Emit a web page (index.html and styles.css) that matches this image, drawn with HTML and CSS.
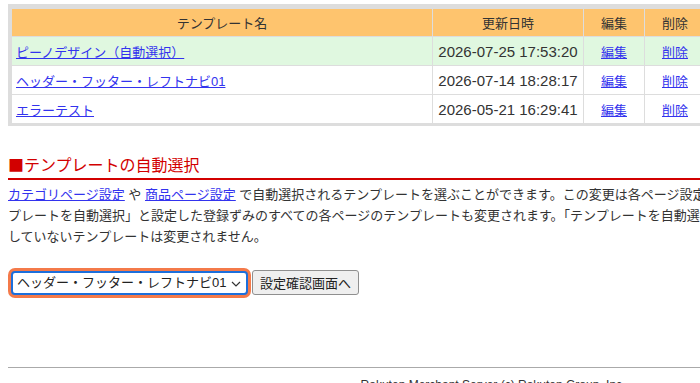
FILE: index.html
```html
<!DOCTYPE html>
<html lang="ja">
<head>
    <meta charset="UTF-8">
    <title>テンプレート一覧</title>
    <link rel="stylesheet" href="styles.css">
</head>
<body>
    <div class="page">
        <div class="table-frame">
            <table class="template-table">
                <tr>
                    <th class="col-name">テンプレート名</th>
                    <th class="col-date">更新日時</th>
                    <th class="col-action">編集</th>
                    <th class="col-action">削除</th>
                </tr>
                <tr class="auto-row">
                    <td class="name"><a href="#">ピーノデザイン（自動選択）</a></td>
                    <td class="date">2026-07-25 17:53:20</td>
                    <td><a href="#">編集</a></td>
                    <td><a href="#">削除</a></td>
                </tr>
                <tr>
                    <td class="name"><a href="#">ヘッダー・フッター・レフトナビ01</a></td>
                    <td class="date">2026-07-14 18:28:17</td>
                    <td><a href="#">編集</a></td>
                    <td><a href="#">削除</a></td>
                </tr>
                <tr>
                    <td class="name"><a href="#">エラーテスト</a></td>
                    <td class="date">2026-05-21 16:29:41</td>
                    <td><a href="#">編集</a></td>
                    <td><a href="#">削除</a></td>
                </tr>
            </table>
        </div>

        <h2 class="section-title">■テンプレートの自動選択</h2>
        <p class="section-text">
            <a href="#">カテゴリページ設定</a> や <a href="#">商品ページ設定</a> で自動選択されるテンプレートを選ぶことができます。この変更は各ページ設定で「テン<br>プレートを自動選択」と設定した登録ずみのすべての各ページのテンプレートも変更されます。「テンプレートを自動選択」と設定<br>していないテンプレートは変更されません。
        </p>

        <form class="auto-form">
            <span class="select-wrap">
                <select class="template-select">
                    <option>ヘッダー・フッター・レフトナビ01</option>
                    <option>ピーノデザイン</option>
                    <option>エラーテスト</option>
                </select>
                <svg class="select-arrow" width="10" height="6" viewBox="0 0 10 6">
                    <path d="M1 1 L5 5 L9 1" fill="none" stroke="#333" stroke-width="1.2"/>
                </svg>
            </span>
            <button type="button" class="confirm-btn">設定確認画面へ</button>
        </form>

        <hr class="footer-rule">
        <div class="footer">Rakuten Merchant Server (c) Rakuten Group, Inc.</div>
    </div>
</body>
</html>
```

FILE: styles.css
```css
html, body {
    margin: 0;
    overflow: hidden;
    background: #fff;
}
body {
    font-family: "Liberation Sans", "Noto Sans CJK JP", sans-serif;
    font-size: 13px;
    color: #333;
}
a {
    color: #3333ee;
}
.page {
    width: 970px;
    padding: 4px 8px 0;
}
.table-frame {
    width: 695px;
    background-color: #dddddd;
    padding: 4px 3px 2px;
}
.template-table {
    width: 100%;
    border-collapse: separate;
    border-spacing: 1px;
}
.template-table th {
    background-color: #fec46e;
    font-weight: normal;
    height: 27px;
    padding: 0 4px;
    color: #333;
}
.template-table td {
    background-color: #fff;
    height: 28px;
    padding: 0 4px;
    text-align: center;
}
.template-table .auto-row td {
    background-color: #e0f8e0;
}
.template-table td.name {
    text-align: left;
}
.template-table td.date {
    font-size: 15px;
    color: #333;
}
.col-name {
    width: 412px;
}
.col-date {
    width: 142px;
}
.col-action {
    width: 52px;
}
.section-title {
    margin: 27px 0 0;
    padding-bottom: 3px;
    font-family: "Noto Sans CJK JP", sans-serif;
    font-size: 16px;
    font-weight: normal;
    line-height: 22px;
    color: #d20000;
    border-bottom: 2px solid #d20000;
}
.section-text {
    margin: 4px 0 0;
    line-height: 21px;
    white-space: nowrap;
}
.auto-form {
    display: flex;
    align-items: center;
    gap: 4px;
    margin-top: 23px;
}
.select-wrap {
    position: relative;
    display: inline-block;
    margin-left: 3px;
}
.template-select {
    appearance: none;
    -webkit-appearance: none;
    font-family: inherit;
    font-size: 13px;
    color: #222;
    height: 20px;
    width: 211px;
    padding: 0 18px 0 4px;
    border: 2px solid #1c6fdc;
    border-radius: 4px;
    box-shadow: 0 0 0 3px #f47a4a;
    background: #fff;
    box-sizing: content-box;
}
.select-arrow {
    position: absolute;
    right: 7px;
    top: 10px;
}
.confirm-btn {
    font-family: inherit;
    font-size: 13px;
    color: #222;
    height: 25px;
    padding: 0 7px;
    background-color: #efefef;
    border: 1px solid #8f8f8f;
    border-radius: 3px;
}
.footer-rule {
    margin: 72px 0 0;
    border: none;
    border-top: 1px solid #aaaaaa;
}
.footer {
    text-align: center;
    font-size: 12px;
    padding-top: 10px;
    color: #333;
}
```
